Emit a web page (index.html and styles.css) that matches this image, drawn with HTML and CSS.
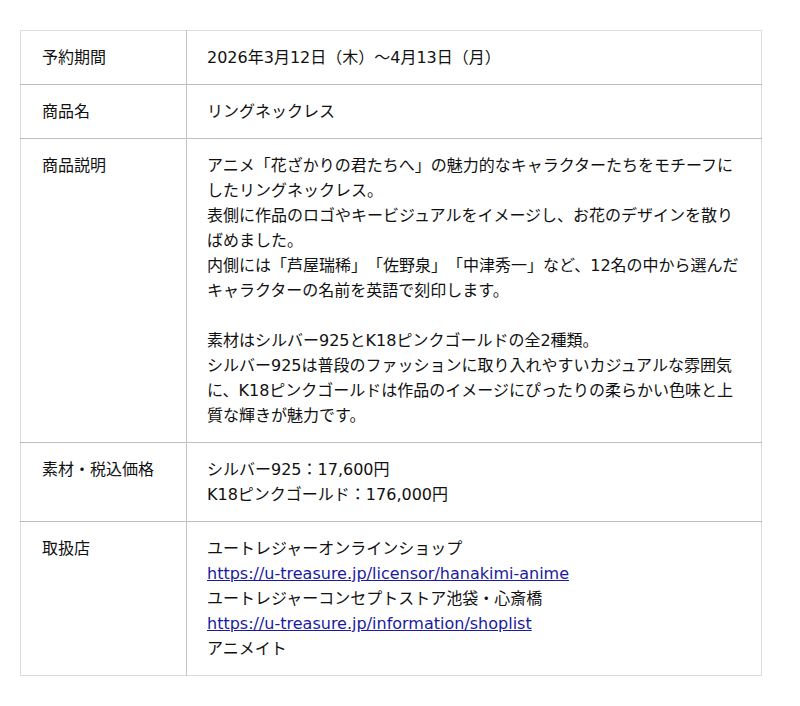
FILE: index.html
```html
<!DOCTYPE html>
<html lang="ja">
<head>
<meta charset="utf-8">
<link rel="stylesheet" href="styles.css">
</head>
<body>
<table class="spec">
  <tr>
    <th>予約期間</th>
    <td>2026年3月12日（木）〜4月13日（月）</td>
  </tr>
  <tr>
    <th>商品名</th>
    <td>リングネックレス</td>
  </tr>
  <tr>
    <th>商品説明</th>
    <td>アニメ「花ざかりの君たちへ」の魅力的なキャラクターたちをモチーフにしたリングネックレス。<br>表側に作品のロゴやキービジュアルをイメージし、お花のデザインを散りばめました。<br>内側には「芦屋瑞稀」「佐野泉」「中津秀一」など、12名の中から選んだキャラクターの名前を英語で刻印します。<br><br>素材はシルバー925とK18ピンクゴールドの全2種類。<br>シルバー925は普段のファッションに取り入れやすいカジュアルな雰囲気に、K18ピンクゴールドは作品のイメージにぴったりの柔らかい色味と上質な輝きが魅力です。</td>
  </tr>
  <tr>
    <th>素材・税込価格</th>
    <td>シルバー925：17,600円<br>K18ピンクゴールド：176,000円</td>
  </tr>
  <tr>
    <th>取扱店</th>
    <td>ユートレジャーオンラインショップ<br><a href="#">https://u-treasure.jp/licensor/hanakimi-anime</a><br>ユートレジャーコンセプトストア池袋・心斎橋<br><a href="#">https://u-treasure.jp/information/shoplist</a><br>アニメイト</td>
  </tr>
</table>
</body>
</html>
```
FILE: styles.css
```css
html, body {
  margin: 0;
  padding: 0;
  background: #fff;
}
body {
  padding: 30px 38px 30px 20px;
  font-family: "DejaVu Sans", "Noto Sans CJK JP", sans-serif;
  font-size: 16px;
  line-height: 25px;
  color: #111;
  text-spacing-trim: space-all;
}
.spec {
  width: 742px;
  border-collapse: collapse;
  border: 1px solid #dcdcdc;
}
.spec th,
.spec td {
  text-align: left;
  vertical-align: top;
  font-weight: normal;
  padding: 14px 20px 14px 20px;
  border-top: 1px solid #bdbdbd;
}
.spec tr:first-child th,
.spec tr:first-child td {
  border-top: 1px solid #dcdcdc;
}
.spec th {
  width: 124px;
  padding-left: 21px;
  border-right: 1px solid #c4c4c4;
}
.spec a {
  color: #1a1aa0;
  text-decoration: underline;
}
```
